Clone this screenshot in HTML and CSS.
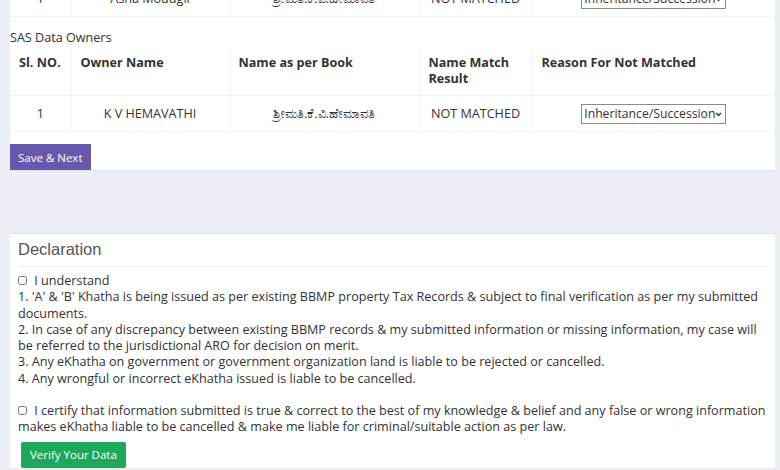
FILE: index.html
```html
<!DOCTYPE html>
<html lang="en">
<head>
    <meta charset="UTF-8">
    <meta name="viewport" content="width=device-width, initial-scale=1.0">
    <title>Owner Verification</title>
    <link rel="stylesheet" href="styles.css">
</head>
<body>

<div class="card owners-card">
    <!-- previous owners table, scrolled mostly out of view -->
    <table class="owners">
        <colgroup>
            <col class="c-no"><col class="c-name"><col class="c-book"><col class="c-match"><col class="c-reason">
        </colgroup>
        <tbody>
            <tr>
                <td>1</td>
                <td>Asha Moudgil</td>
                <td>ಶ್ರೀಮತಿ.ಕೆ.ಪಿ.ಹೇಮಾವತಿ</td>
                <td>NOT MATCHED</td>
                <td>
                    <span class="select-wrap">
                        <select>
                            <option>Inheritance/Succession</option>
                        </select>
                        <svg class="chev" width="7" height="5" viewBox="0 0 7 5"><path d="M1 1l2.5 2.5L6 1" fill="none" stroke="#333" stroke-width="1.3"/></svg>
                    </span>
                </td>
            </tr>
        </tbody>
    </table>

    <div class="section-label">SAS Data Owners</div>
    <table class="owners">
        <colgroup>
            <col class="c-no"><col class="c-name"><col class="c-book"><col class="c-match"><col class="c-reason">
        </colgroup>
        <thead>
            <tr>
                <th>Sl. NO.</th>
                <th>Owner Name</th>
                <th>Name as per Book</th>
                <th>Name Match Result</th>
                <th>Reason For Not Matched</th>
            </tr>
        </thead>
        <tbody>
            <tr>
                <td>1</td>
                <td>K V HEMAVATHI</td>
                <td>ಶ್ರೀಮತಿ.ಕೆ.ವಿ.ಹೇಮಾವತಿ</td>
                <td>NOT MATCHED</td>
                <td>
                    <span class="select-wrap">
                        <select>
                            <option>Inheritance/Succession</option>
                        </select>
                        <svg class="chev" width="7" height="5" viewBox="0 0 7 5"><path d="M1 1l2.5 2.5L6 1" fill="none" stroke="#333" stroke-width="1.3"/></svg>
                    </span>
                </td>
            </tr>
        </tbody>
    </table>

    <button class="btn btn-purple">Save &amp; Next</button>
</div>

<div class="card declaration">
    <h3>Declaration</h3>
    <div class="decl-body">
        <label class="check-line"><input type="checkbox"> I understand</label>
        <div>1. 'A' &amp; 'B' Khatha is being issued as per existing BBMP property Tax Records &amp; subject to final verification as per my submitted documents.</div>
        <div>2. In case of any discrepancy between existing BBMP records &amp; my submitted information or missing information, my case will be referred to the jurisdictional ARO for decision on merit.</div>
        <div>3. Any eKhatha on government or government organization land is liable to be rejected or cancelled.</div>
        <div>4. Any wrongful or incorrect eKhatha issued is liable to be cancelled.</div>
        <br>
        <label class="check-line"><input type="checkbox"> I certify that information submitted is true &amp; correct to the best of my knowledge &amp; belief and any false or wrong information makes eKhatha liable to be cancelled &amp; make me liable for criminal/suitable action as per law.</label>
    </div>
    <button class="btn btn-green">Verify Your Data</button>
</div>

</body>
</html>
```

FILE: styles.css
```css
body {
    font-family: "Open Sans", "Noto Sans", sans-serif;
    font-size: 12.6px;
    color: #333;
    margin: 0;
    padding: 0;
    background-color: #eceef6;
}
.card {
    background: white;
    margin: 0 5px 0 10px;
}
.owners-card {
    margin-top: -19px;
    border-bottom: 1px solid #dfe1e8;
}
.owners {
    width: 100%;
    border-collapse: collapse;
    table-layout: fixed;
}
.c-no { width: 61px; }
.c-name { width: 158px; }
.c-book { width: 190px; }
.c-match { width: 113px; }
.owners th {
    text-align: left;
    font-weight: bold;
    line-height: 16px;
    padding: 8px 8px 8px 9px;
    vertical-align: top;
    height: 32px;
    border-right: 1px solid #f4f4f4;
    border-bottom: 1px solid #f2f2f2;
}
.owners td {
    text-align: center;
    color: #333;
    height: 35px;
    padding: 0 8px;
    border-right: 1px solid #f4f4f4;
    border-bottom: 1px solid #f2f2f2;
}
.owners th:last-child,
.owners td:last-child {
    border-right: none;
}
.select-wrap {
    position: relative;
    display: inline-block;
}
.owners select {
    appearance: none;
    -webkit-appearance: none;
    font-family: "Open Sans", "Noto Sans", sans-serif;
    font-size: 12.2px;
    color: #333;
    height: 20px;
    width: 145px;
    padding: 0 10px 0 2px;
    border: 1px solid #8a8a8a;
    border-radius: 0;
    background: white;
    vertical-align: middle;
}
.chev {
    position: absolute;
    right: 4px;
    top: 8px;
    pointer-events: none;
}
.section-label {
    margin-top: 12px;
    line-height: 17px;
    height: 18px;
}
.btn {
    font-family: "Open Sans", "Noto Sans", sans-serif;
    font-size: 11.5px;
    color: white;
    border: none;
    cursor: pointer;
}
.btn-purple {
    display: block;
    margin-top: 12px;
    background-color: #6858ad;
    height: 26px;
    padding: 0 8px;
}
.declaration {
    margin-top: 62px;
    border-top: 1px solid #dcdfe7;
    padding: 5px 8px 0 8px;
}
.declaration h3 {
    font-family: "Liberation Sans", Arial, sans-serif;
    font-weight: normal;
    font-size: 16.5px;
    color: #555;
    line-height: 20px;
    margin: 0;
    padding-bottom: 7px;
    border-bottom: 1px solid #eeeeee;
}
.decl-body {
    padding-top: 6px;
    line-height: 16.25px;
}
.check-line input {
    width: 9px;
    height: 9px;
    margin: 0 4px 0 0;
    vertical-align: 0;
}
.btn-green {
    margin: 6px 0 0 3px;
    background-color: #1ea85a;
    height: 26px;
    padding: 0 9px;
    border-radius: 2px;
}
```
